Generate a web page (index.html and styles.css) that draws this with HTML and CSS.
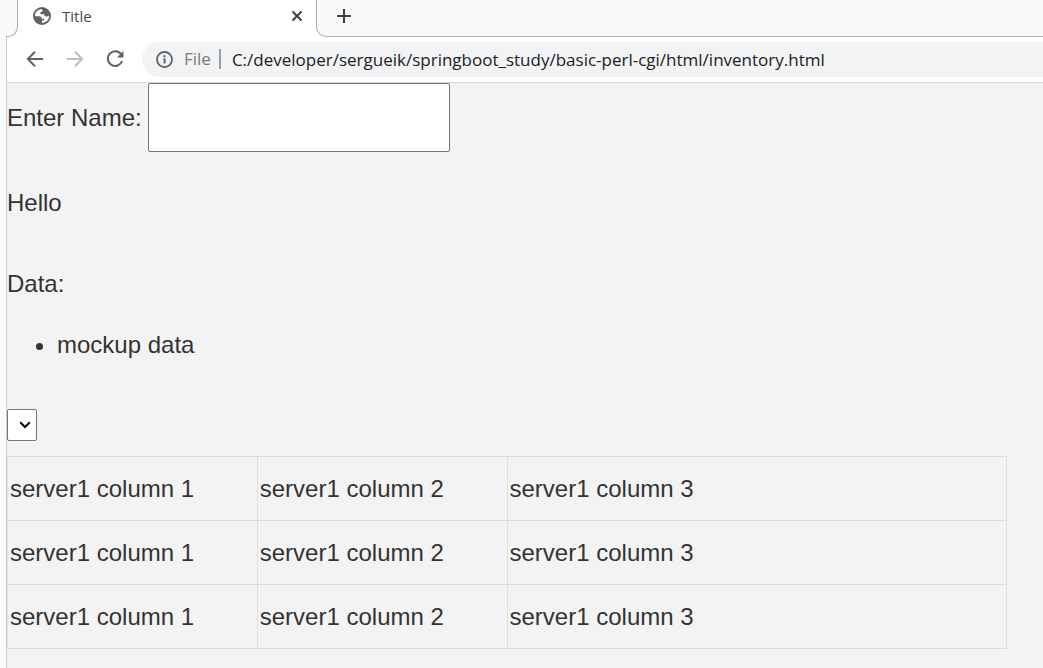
FILE: index.html
```html
<!DOCTYPE html>
<html lang="en">
<head>
<meta charset="utf-8">
<title>Title</title>
<link rel="stylesheet" href="styles.css">
</head>
<body>
<header class="tab-strip">
  <div class="strip-start"></div>
  <div class="tab">
    <svg class="globe" viewBox="0 0 18 18" aria-hidden="true"><circle cx="9" cy="9" r="9" fill="#5f6368"/><path d="M8.500 2Q4.500 2.500 2.500 6Q1.800 8 2 9.200L6.500 9.200Q8.800 9.500 8.800 11.700L11.200 11.700V13.500H9V16Q13.500 15.500 15.500 12Q16.200 10 15.900 8.600Q14.500 9.800 13 9.400Q11.300 9.500 11.200 7.200H7.400V5.100Q9.700 5.100 9.600 3.400Z" fill="#fff"/></svg>
    <span class="tab-title">Title</span>
    <button class="icon-button" aria-label="Close tab"><svg class="close" viewBox="0 0 12 12"><path d="M1.500 1.500l9 9M10.500 1.500l-9 9" stroke="#3c4043" stroke-width="2"/></svg></button>
  </div>
  <div class="strip-end">
    <button class="icon-button" aria-label="New tab"><svg class="plus" viewBox="0 0 16 16"><path d="M8 1v14M1 8h14" stroke="#3c4043" stroke-width="2.200"/></svg></button>
  </div>
</header>
<div class="window">
  <nav class="toolbar">
    <button class="icon-button" aria-label="Back"><svg class="nav-icon" viewBox="0 0 18 18"><path d="M17 9H2M9 1.800L1.800 9L9 16.200" fill="none" stroke="#5f6368" stroke-width="2"/></svg></button>
    <button class="icon-button" aria-label="Forward"><svg class="nav-icon" viewBox="0 0 18 18"><path d="M1 9h15M9 1.800L16.200 9L9 16.200" fill="none" stroke="#bdbfc1" stroke-width="2"/></svg></button>
    <button class="icon-button" aria-label="Reload"><svg class="nav-icon" viewBox="0 0 18 18"><path d="M15.200 4.500A7.300 7.300 0 1 0 16.100 11" fill="none" stroke="#5f6368" stroke-width="2"/><path d="M17.500 1v6.500h-6.500z" fill="#5f6368"/></svg></button>
    <div class="address">
      <svg class="info" viewBox="0 0 17 17" aria-hidden="true"><circle cx="8.500" cy="8.500" r="7.500" fill="none" stroke="#5f6368" stroke-width="1.800"/><path d="M8.500 4.200v2M8.500 7.500v5" stroke="#5f6368" stroke-width="2"/></svg>
      <span class="scheme">File</span>
      <span class="divider"></span>
      <input class="url" type="text" aria-label="Address" value="C:/developer/sergueik/springboot_study/basic-perl-cgi/html/inventory.html">
    </div>
  </nav>
  <main class="page">
    <div class="field"><label for="name">Enter Name:</label><input class="name" id="name" type="text"></div>
    <p class="greeting">Hello</p>
    <p class="data-label">Data:</p>
    <ul class="data"><li>mockup data</li></ul>
    <div class="picker">
      <select class="select" aria-label="Server"></select>
      <svg class="chevron" viewBox="0 0 12 8" aria-hidden="true"><path d="M1.200 1.200L6 6L10.800 1.200" fill="none" stroke="#000" stroke-width="2"/></svg>
    </div>
    <table class="servers">
      <tbody>
        <tr><td>server1 column 1</td><td>server1 column 2</td><td class="wide">server1 column 3</td></tr>
        <tr><td>server1 column 1</td><td>server1 column 2</td><td class="wide">server1 column 3</td></tr>
        <tr><td>server1 column 1</td><td>server1 column 2</td><td class="wide">server1 column 3</td></tr>
      </tbody>
    </table>
  </main>
</div>
</body>
</html>
```
FILE: styles.css
```css
* { box-sizing: border-box; }

body {
  margin: 0;
  min-height: 100vh;
  display: flex;
  flex-direction: column;
  background: #fafafa;
  color: #333;
  font-family: "Liberation Sans", Arial, sans-serif;
  font-size: 24px;
}

svg { display: block; }

.icon-button {
  display: block;
  padding: 0;
  border: 0;
  background: none;
}

.tab-strip {
  display: flex;
  height: 37px;
  padding-left: 6px;
  background: linear-gradient(90deg, #fafafa 6px, #fff 6px);
}

.strip-start {
  width: 12px;
  background: #fafafa;
  border: solid #b0b0b0;
  border-width: 0 1px 1px 0;
  border-bottom-right-radius: 10px;
}

.tab {
  display: flex;
  align-items: center;
  width: 298px;
  padding: 0 13px 6px 15px;
  background: #fff;
}

.globe { width: 18px; height: 18px; }

.tab-title {
  flex: 1;
  margin-left: 11px;
  font: 15px/20px "Open Sans", sans-serif;
  color: #45484c;
}

.close { width: 12px; height: 12px; }

.strip-end {
  flex: 1;
  display: flex;
  align-items: center;
  padding: 0 0 5px 19px;
  background: #fafafa;
  border: solid #b0b0b0;
  border-width: 0 0 1px 1px;
  border-bottom-left-radius: 10px;
}

.plus { width: 16px; height: 16px; }

.window {
  flex: 1;
  display: flex;
  flex-direction: column;
  margin-left: 6px;
  border-left: 1px solid #ccc;
}

.toolbar {
  display: flex;
  align-items: center;
  gap: 22px;
  height: 46px;
  padding: 0 0 1px 19px;
  background: #fff;
  border-bottom: 1px solid #d5d5d7;
}

.nav-icon { width: 18px; height: 18px; }

.address {
  flex: 1;
  display: flex;
  align-items: center;
  height: 35px;
  margin-left: -4px;
  padding-left: 14px;
  border-radius: 18px 0 0 18px;
  background: #f1f3f4;
  font: 17px/24px "Open Sans", sans-serif;
}

.info { width: 17px; height: 17px; }

.scheme {
  margin: 0 8px 0 11px;
  color: #777a7e;
}

.divider {
  width: 2px;
  height: 20px;
  background: #9a9da1;
}

.url {
  flex: 1;
  min-width: 0;
  height: 26px;
  padding: 0 0 0 11px;
  border: 0;
  background: none;
  color: #202124;
  font: inherit;
}

.page {
  flex: 1;
  background: #f3f3f3;
}

.field {
  display: flex;
  align-items: center;
  gap: 6px;
}

.name {
  width: 302px;
  height: 69px;
  padding: 0 8px;
  border: 1px solid #767676;
  border-radius: 2px;
  background: #fff;
  font: inherit;
}

.greeting,
.data-label {
  margin: 31px 0 0;
  line-height: 40px;
}

.data-label { margin-top: 41px; }

.data {
  margin: 21px 0 0;
  padding-left: 50px;
  line-height: 40px;
}

.picker {
  display: grid;
  width: 30px;
  margin-top: 44px;
}

.select {
  grid-area: 1 / 1;
  appearance: none;
  width: 30px;
  height: 32px;
  border: 1px solid #767676;
  border-radius: 2px;
  background: #fff;
}

.chevron {
  grid-area: 1 / 1;
  place-self: center end;
  width: 12px;
  height: 8px;
  margin-right: 6px;
  pointer-events: none;
}

.servers {
  width: 100%;
  max-width: 1000px;
  margin-top: 15px;
  border-collapse: collapse;
  table-layout: fixed;
}

.servers td {
  height: 64px;
  padding: 0 2px;
  border: 1px solid #dadfe5;
}

.servers .wide { width: 50%; }
```
